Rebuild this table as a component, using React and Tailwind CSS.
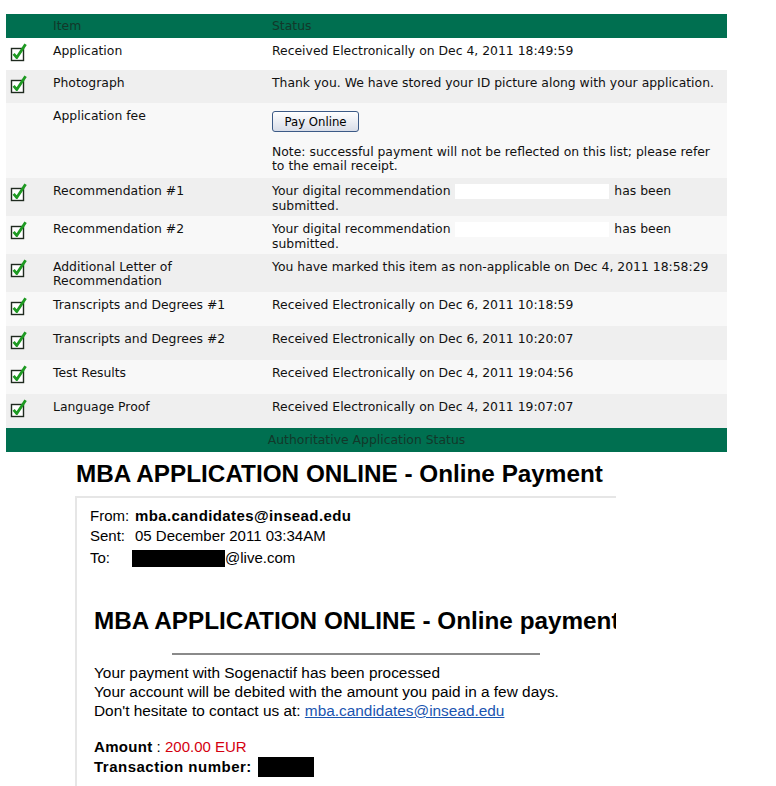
import React from 'react';

const Check = () => (
  <svg width="17" height="19" viewBox="0 0 17 19" className="block">
    <rect x="1.5" y="5.5" width="12" height="12" fill="#fff" stroke="#1f2a1f" strokeWidth="1.4" />
    <path d="M3.6 10.8 L6.8 14.6 L15.6 1.2" fill="none" stroke="#1e9a22" strokeWidth="2.8" strokeLinejoin="round" />
  </svg>
);

const Row = ({ bg, h, icon = true, item, children }) => (
  <div className={`grid grid-cols-[47px_219px_1fr] ${bg} ${h}`}>
    <div className="pl-[4px] pt-[5px]">{icon && <Check />}</div>
    <div className="pt-[6px]">{item}</div>
    <div className="pt-[6px] whitespace-nowrap">{children}</div>
  </div>
);

const Redact = () => <span className="inline-block w-[154px] h-[15px] bg-white align-middle mx-[1px]" />;

export default function App() {
  return (
    <div className="w-[776px] h-[786px] bg-white overflow-hidden">
      {/* status table */}
      <div className="ml-[6px] mt-[14px] w-[721px] text-[12.4px] leading-[14px] text-[#111] font-['DejaVu_Sans',Verdana,sans-serif]">
        <div className="grid grid-cols-[47px_219px_1fr] h-[24px] items-center bg-[#006f50] text-[#12382a]">
          <div />
          <div>Item</div>
          <div>Status</div>
        </div>
        <Row bg="bg-white" h="h-[32px]" item="Application">Received Electronically on Dec 4, 2011 18:49:59</Row>
        <Row bg="bg-[#efefef]" h="h-[33px]" item="Photograph">Thank you. We have stored your ID picture along with your application.</Row>
        <Row bg="bg-[#f8f8f8]" h="h-[75px]" icon={false} item="Application fee">
          <button className="mt-[2px] w-[87px] h-[21px] rounded-[3px] border border-[#3c5a86] bg-gradient-to-b from-white to-[#d8dde8] text-[13px] text-black font-['DejaVu_Sans_Condensed',Tahoma,sans-serif]">
            Pay Online
          </button>
          <div className="mt-[13px]">
            Note: successful payment will not be reflected on this list; please refer<br />to the email receipt.
          </div>
        </Row>
        <Row bg="bg-[#efefef]" h="h-[38px]" item="Recommendation #1">
          Your digital recommendation <Redact /> has been<br />submitted.
        </Row>
        <Row bg="bg-[#f8f8f8]" h="h-[38px]" item="Recommendation #2">
          Your digital recommendation <Redact /> has been<br />submitted.
        </Row>
        <Row bg="bg-[#efefef]" h="h-[38px]" item={<>Additional Letter of<br />Recommendation</>}>
          You have marked this item as non-applicable on Dec 4, 2011 18:58:29
        </Row>
        <Row bg="bg-[#f8f8f8]" h="h-[34px]" item="Transcripts and Degrees #1">Received Electronically on Dec 6, 2011 10:18:59</Row>
        <Row bg="bg-[#efefef]" h="h-[34px]" item="Transcripts and Degrees #2">Received Electronically on Dec 6, 2011 10:20:07</Row>
        <Row bg="bg-[#f8f8f8]" h="h-[34px]" item="Test Results">Received Electronically on Dec 4, 2011 19:04:56</Row>
        <Row bg="bg-[#efefef]" h="h-[34px]" item="Language Proof">Received Electronically on Dec 4, 2011 19:07:07</Row>
        <div className="h-[24px] flex items-center justify-center bg-[#006f50] text-[#12382a]">
          Authoritative Application Status
        </div>
      </div>

      {/* email receipt */}
      <div className="ml-[76px] mt-[8px] font-['Liberation_Sans',Arial,sans-serif] text-black">
        <h1 className="text-[24.3px] leading-[28px] font-bold">MBA APPLICATION ONLINE - Online Payment</h1>
        <div className="mt-[8px] ml-[-1px] w-[541px] h-[300px] border-l-2 border-t-2 border-[#e6e6e6] overflow-hidden">
          <div className="pl-[13px] pt-[8px] text-[15px] leading-[20px]">
            <div className="flex"><span className="w-[45px]">From:</span><b className="tracking-[0.4px]">mba.candidates@insead.edu</b></div>
            <div className="flex"><span className="w-[45px]">Sent:</span><span>05 December 2011 03:34AM</span></div>
            <div className="flex mt-[2px] items-center">
              <span className="w-[42px]">To:</span>
              <span className="inline-block w-[93px] h-[17px] bg-black" />
              <span>@live.com</span>
            </div>
          </div>
          <div className="pl-[17px] mt-[39px] whitespace-nowrap">
            <h2 className="text-[24.3px] leading-[28px] font-bold">MBA APPLICATION ONLINE - Online payment</h2>
            <div className="ml-[78px] mt-[18px] w-[368px] h-[2px] bg-[#8a8a8a]" />
            <div className="mt-[8px] text-[15.4px] leading-[19px]">
              <div>Your payment with Sogenactif has been processed</div>
              <div>Your account will be debited with the amount you paid in a few days.</div>
              <div>
                Don't hesitate to contact us at: <a href="#" className="text-[#1a55b0] underline">mba.candidates@insead.edu</a>
              </div>
            </div>
            <div className="mt-[17px] text-[15px] leading-[20px]">
              <div><b className="tracking-[0.3px]">Amount</b> : <span className="text-[#d4000f]">200.00 EUR</span></div>
              <div className="flex items-center">
                <b className="tracking-[0.5px]">Transaction number:</b>
                <span className="inline-block ml-[6px] w-[56px] h-[20px] bg-black" />
              </div>
            </div>
          </div>
        </div>
      </div>
    </div>
  );
}
